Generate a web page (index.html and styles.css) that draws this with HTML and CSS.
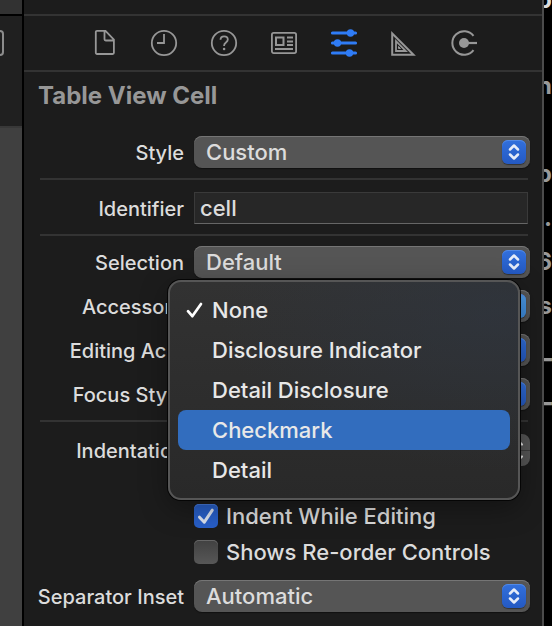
FILE: index.html
```html
<!DOCTYPE html>
<html lang="en">
<head>
<meta charset="utf-8">
<title>Attributes Inspector</title>
<link rel="stylesheet" href="styles.css">
</head>
<body>
<svg class="defs" aria-hidden="true">
  <symbol id="chevrons" viewBox="0 0 24 24"><path d="M8 9.500 12 5.500l4 4M8 14.500l4 4 4-4" fill="none" stroke="#e6ecf8" stroke-width="2.500" stroke-linecap="round" stroke-linejoin="round"/></symbol>
</svg>
<div class="window">
  <div class="canvas-edge">
    <div class="edge-top"></div>
    <div class="edge-bar"><span class="edge-button"></span></div>
    <div class="edge-canvas"></div>
  </div>

  <main class="inspector">
    <div class="strip"></div>
    <nav class="tabs">
      <button type="button" aria-label="File"><svg viewBox="0 0 28 28"><path d="M7 1.900h8.500L23.900 10.500v13.300a1.200 1.200 0 0 1-1.200 1.200H7a1.200 1.200 0 0 1-1.200-1.200V3.100A1.200 1.200 0 0 1 7 1.900zM14.500 2v8.300a1.200 1.200 0 0 0 1.200 1.200h8"/></svg></button>
      <button type="button" aria-label="History"><svg viewBox="0 0 28 28"><circle cx="14" cy="14" r="12.200"/><path d="M14 5v9H7"/></svg></button>
      <button type="button" aria-label="Quick Help"><svg viewBox="0 0 28 28"><circle cx="14" cy="14" r="12.200"/><path d="M10.500 10.800c0-2.200 1.500-3.400 3.600-3.400s3.700 1.200 3.700 3.200c0 3-3.700 2.900-3.700 5.900v.4"/><circle class="solid" cx="14.100" cy="20" r="1.300"/></svg></button>
      <button type="button" aria-label="Identity"><svg viewBox="0 0 28 28"><rect x="1.900" y="3.900" width="24.200" height="20.200" rx="1.800"/><path d="M6 8.500h7.500v7.500H6zM17 8.500h6M17 12.500h6M17 16h6M5 20h18" stroke-width="2"/></svg></button>
      <button type="button" aria-label="Attributes" class="active"><svg viewBox="0 0 28 28"><path d="M2.500 4h23M2.500 14h23M2.500 24h23" stroke-width="3.200" stroke-linecap="round"/><circle class="solid" cx="20.500" cy="4" r="3.700"/><circle class="solid" cx="7.500" cy="14" r="3.700"/><circle class="solid" cx="19.500" cy="24" r="3.700"/></svg></button>
      <button type="button" aria-label="Size"><svg viewBox="0 0 28 28"><path d="M2.200 4.500v21.300h21.300z" stroke-width="2"/><path d="M6 12.200V22h9.800z" stroke-width="1.800"/><path d="M8.500 17.500v2h2z" stroke-width="1"/></svg></button>
      <button type="button" aria-label="Connections"><svg viewBox="0 0 28 28"><path d="M23.500 6.800a11.800 11.800 0 1 0 0 14.400" stroke-width="2"/><path d="M14 14h13" stroke-width="2.200"/><circle class="solid" cx="14" cy="14" r="5"/></svg></button>
    </nav>
    <form class="attributes">
      <h1>Table View Cell</h1>
      <div class="row">
        <label for="style">Style</label>
        <span class="popup"><select id="style"><option>Custom</option></select><svg><use href="#chevrons"/></svg></span>
      </div>
      <hr>
      <div class="row spaced">
        <label for="identifier">Identifier</label>
        <input id="identifier" class="field" type="text" value="cell">
      </div>
      <hr>
      <div class="group">
        <div class="row">
          <label for="selection">Selection</label>
          <span class="popup"><select id="selection"><option>Default</option></select><svg><use href="#chevrons"/></svg></span>
        </div>
        <div class="row">
          <label for="accessory">Accessory</label>
          <span class="popup open"><select id="accessory"><option>None</option></select><svg><use href="#chevrons"/></svg>
            <span class="menu" role="menu">
              <button type="button" role="menuitemradio" aria-checked="true"><svg viewBox="0 0 20 20"><path d="M4 11.200l4.300 5L17 4" fill="none" stroke="#fff" stroke-width="2.700" stroke-linecap="round" stroke-linejoin="round"/></svg>None</button>
              <button type="button" role="menuitemradio" aria-checked="false">Disclosure Indicator</button>
              <button type="button" role="menuitemradio" aria-checked="false">Detail Disclosure</button>
              <button type="button" role="menuitemradio" aria-checked="false" class="highlighted">Checkmark</button>
              <button type="button" role="menuitemradio" aria-checked="false">Detail</button>
            </span>
          </span>
        </div>
        <div class="row">
          <label for="editing">Editing Acc.</label>
          <span class="popup"><select id="editing"><option>None</option></select><svg><use href="#chevrons"/></svg></span>
        </div>
        <div class="row">
          <label for="focus">Focus Style</label>
          <span class="popup"><select id="focus"><option>Default</option></select><svg><use href="#chevrons"/></svg></span>
        </div>
      </div>
      <hr>
      <div class="row spaced">
        <label for="indentation">Indentation</label>
        <input id="indentation" class="field" type="text" value="0">
        <span class="stepper">
          <button type="button" aria-label="Increase"><svg viewBox="0 0 24 16"><path d="M8 10.500l4-4 4 4"/></svg></button>
          <button type="button" aria-label="Decrease"><svg viewBox="0 0 24 16"><path d="M8 5.500l4 4 4-4"/></svg></button>
        </span>
      </div>
      <div class="checks">
        <label><input type="checkbox" checked><svg viewBox="0 0 24 24"><path d="M5.500 13.200l4.800 5L18.300 6.200"/></svg>Indent While Editing</label>
        <label><input type="checkbox"><svg viewBox="0 0 24 24"><path d="M5.500 13.200l4.800 5L18.300 6.200"/></svg>Shows Re-order Controls</label>
      </div>
      <div class="row">
        <label for="separator">Separator Inset</label>
        <span class="popup"><select id="separator"><option>Automatic</option></select><svg><use href="#chevrons"/></svg></span>
      </div>
    </form>
  </main>

  <aside class="behind">
    <span class="bright">b</span><span></span><span>n</span><span></span><span>p</span><span>.</span><span>6</span><span>s</span><span class="heavy">_</span><span class="heavy">_</span>
  </aside>
</div>
</body>
</html>
```
FILE: styles.css
```css
* { box-sizing: border-box; }

body {
  margin: 0;
  background: #000;
  color: #dcdcdc;
  font: 500 20px/24px Inter, "Liberation Sans", sans-serif;
  overflow: hidden;
}

button, input, select { font: inherit; color: inherit; margin: 0; }
.defs { position: absolute; width: 0; height: 0; }

.window { display: flex; min-height: 100vh; }

/* Neighbouring editor */
.canvas-edge {
  flex: none;
  width: 24px;
  display: flex;
  flex-direction: column;
  border-right: 2px solid #000;
}
.edge-top { height: 16px; background: #323232; border-bottom: 2px solid #000; }
.edge-bar { height: 110px; padding-top: 14px; background: #202020; overflow: hidden; }
.edge-button {
  display: block;
  width: 4px;
  height: 26px;
  border: 2px solid #8c8c8c;
  border-left: 0;
  border-radius: 0 4px 4px 0;
}
.edge-canvas { flex: 1; background: #404040; border-top: 2px solid #383838; }

/* Inspector */
.inspector {
  flex: 1;
  min-width: 0;
  background: #1c1c1c;
  border-right: 2px solid #4b4b4b;
}
.strip { height: 16px; border-bottom: 2px solid #333; }
.tabs {
  display: flex;
  justify-content: center;
  gap: 32px;
  height: 56px;
  padding: 13px 0 0 2px;
  border-bottom: 2px solid #333;
}
.tabs button {
  width: 28px;
  height: 28px;
  padding: 0;
  border: 0;
  background: none;
  color: #979797;
}
.tabs .active { color: #2f7cf6; }
.tabs svg {
  display: block;
  width: 28px;
  height: 28px;
  fill: none;
  stroke: currentColor;
  stroke-width: 1.8;
}
.tabs .solid { fill: currentColor; stroke: none; }

.attributes { padding: 8px 12px; }
h1 {
  margin: 0 0 24px;
  padding-left: 2px;
  color: #979797;
  font-size: 24px;
  line-height: 32px;
  font-weight: 700;
}
hr { height: 2px; margin: 10px 2px 10px 4px; border: 0; background: #333; }

.row { display: flex; align-items: center; gap: 10px; height: 32px; }
.row > label { flex: none; width: 148px; padding-top: 2px; text-align: right; white-space: nowrap; }
.row.spaced { margin-top: 12px; }
.group { display: flex; flex-direction: column; gap: 12px; }

.popup { position: relative; flex: 1; display: flex; height: 32px; }
.popup select {
  flex: 1;
  padding: 0 40px 0 12px;
  appearance: none;
  border: 0;
  border-radius: 8px;
  background: #555;
  box-shadow: inset 0 1px #757575, 0 1px 1px #111;
  font-size: 22px;
}
.popup > svg {
  position: absolute;
  top: 4px;
  right: 4px;
  width: 24px;
  height: 24px;
  border-radius: 6px;
  background: linear-gradient(#3270dc, #2459c2);
  box-shadow: inset 0 1px #5289e5, 0 1px 1px #333;
  pointer-events: none;
}
.popup.open > svg { background: linear-gradient(#4d9ae4, #3d8bdc); }

.field {
  flex: 1;
  min-width: 0;
  height: 32px;
  margin-right: 2px;
  padding: 0 5px;
  border: 1px solid #3a3a3a;
  border-bottom-color: #666;
  border-radius: 0;
  background: #272727;
  font-size: 22px;
  outline: 0;
}

.stepper { width: 24px; height: 32px; border-radius: 8px; overflow: hidden; background: #555; }
.stepper button { display: block; width: 24px; height: 16px; padding: 0; border: 0; background: none; }
.stepper button + button { border-top: 1px solid #3c3c3c; }
.stepper svg { display: block; width: 24px; height: 16px; fill: none; stroke: #ddd; stroke-width: 2.2; stroke-linecap: round; }

/* Open menu */
.menu {
  position: absolute;
  z-index: 1;
  top: -10px;
  left: -26px;
  right: 10px;
  padding: 8px;
  border: 2px solid #565656;
  border-radius: 13px;
  background: radial-gradient(ellipse at 95% 15%, rgba(46, 54, 66, .6), rgba(46, 54, 66, 0) 60%), linear-gradient(#323232, #292929);
  box-shadow: 0 0 0 1px #050505, 0 8px 28px rgba(0, 0, 0, .35);
}
.menu button {
  position: relative;
  display: block;
  width: 100%;
  height: 40px;
  padding: 0 34px;
  border: 0;
  border-radius: 8px;
  background: none;
  color: #e8e8e8;
  font-size: 22px;
  text-align: left;
}
.menu .highlighted { background: #326dbe; }
.menu svg { position: absolute; left: 6px; top: 10px; width: 20px; height: 20px; }

.checks { display: flex; flex-direction: column; gap: 12px; margin: 38px 0 16px 158px; }
.checks label { position: relative; display: flex; align-items: center; gap: 8px; font-size: 22px; white-space: nowrap; }
.checks input {
  flex: none;
  width: 24px;
  height: 24px;
  appearance: none;
  border-radius: 5px;
  background: linear-gradient(#414141, #575757);
  box-shadow: inset 0 1px #666;
}
.checks input:checked {
  background: #285fc8;
  box-shadow: inset 0 1px #477bdc;
}
.checks svg {
  position: absolute;
  top: 0;
  left: 0;
  width: 24px;
  height: 24px;
  fill: none;
  stroke: #dce3f0;
  stroke-width: 3;
  stroke-linecap: round;
  stroke-linejoin: round;
  visibility: hidden;
  pointer-events: none;
}
.checks input:checked + svg { visibility: visible; }

/* Text of the window behind */
.behind { flex: none; width: 8px; height: 440px; overflow: hidden; color: #999; font-weight: 700; font-size: 24px; }
.behind span { display: flex; justify-content: flex-end; height: 44px; line-height: 44px; }
.behind .bright { height: 20px; line-height: 0; color: #ddd; }
.behind .heavy { font-weight: 900; }
```
